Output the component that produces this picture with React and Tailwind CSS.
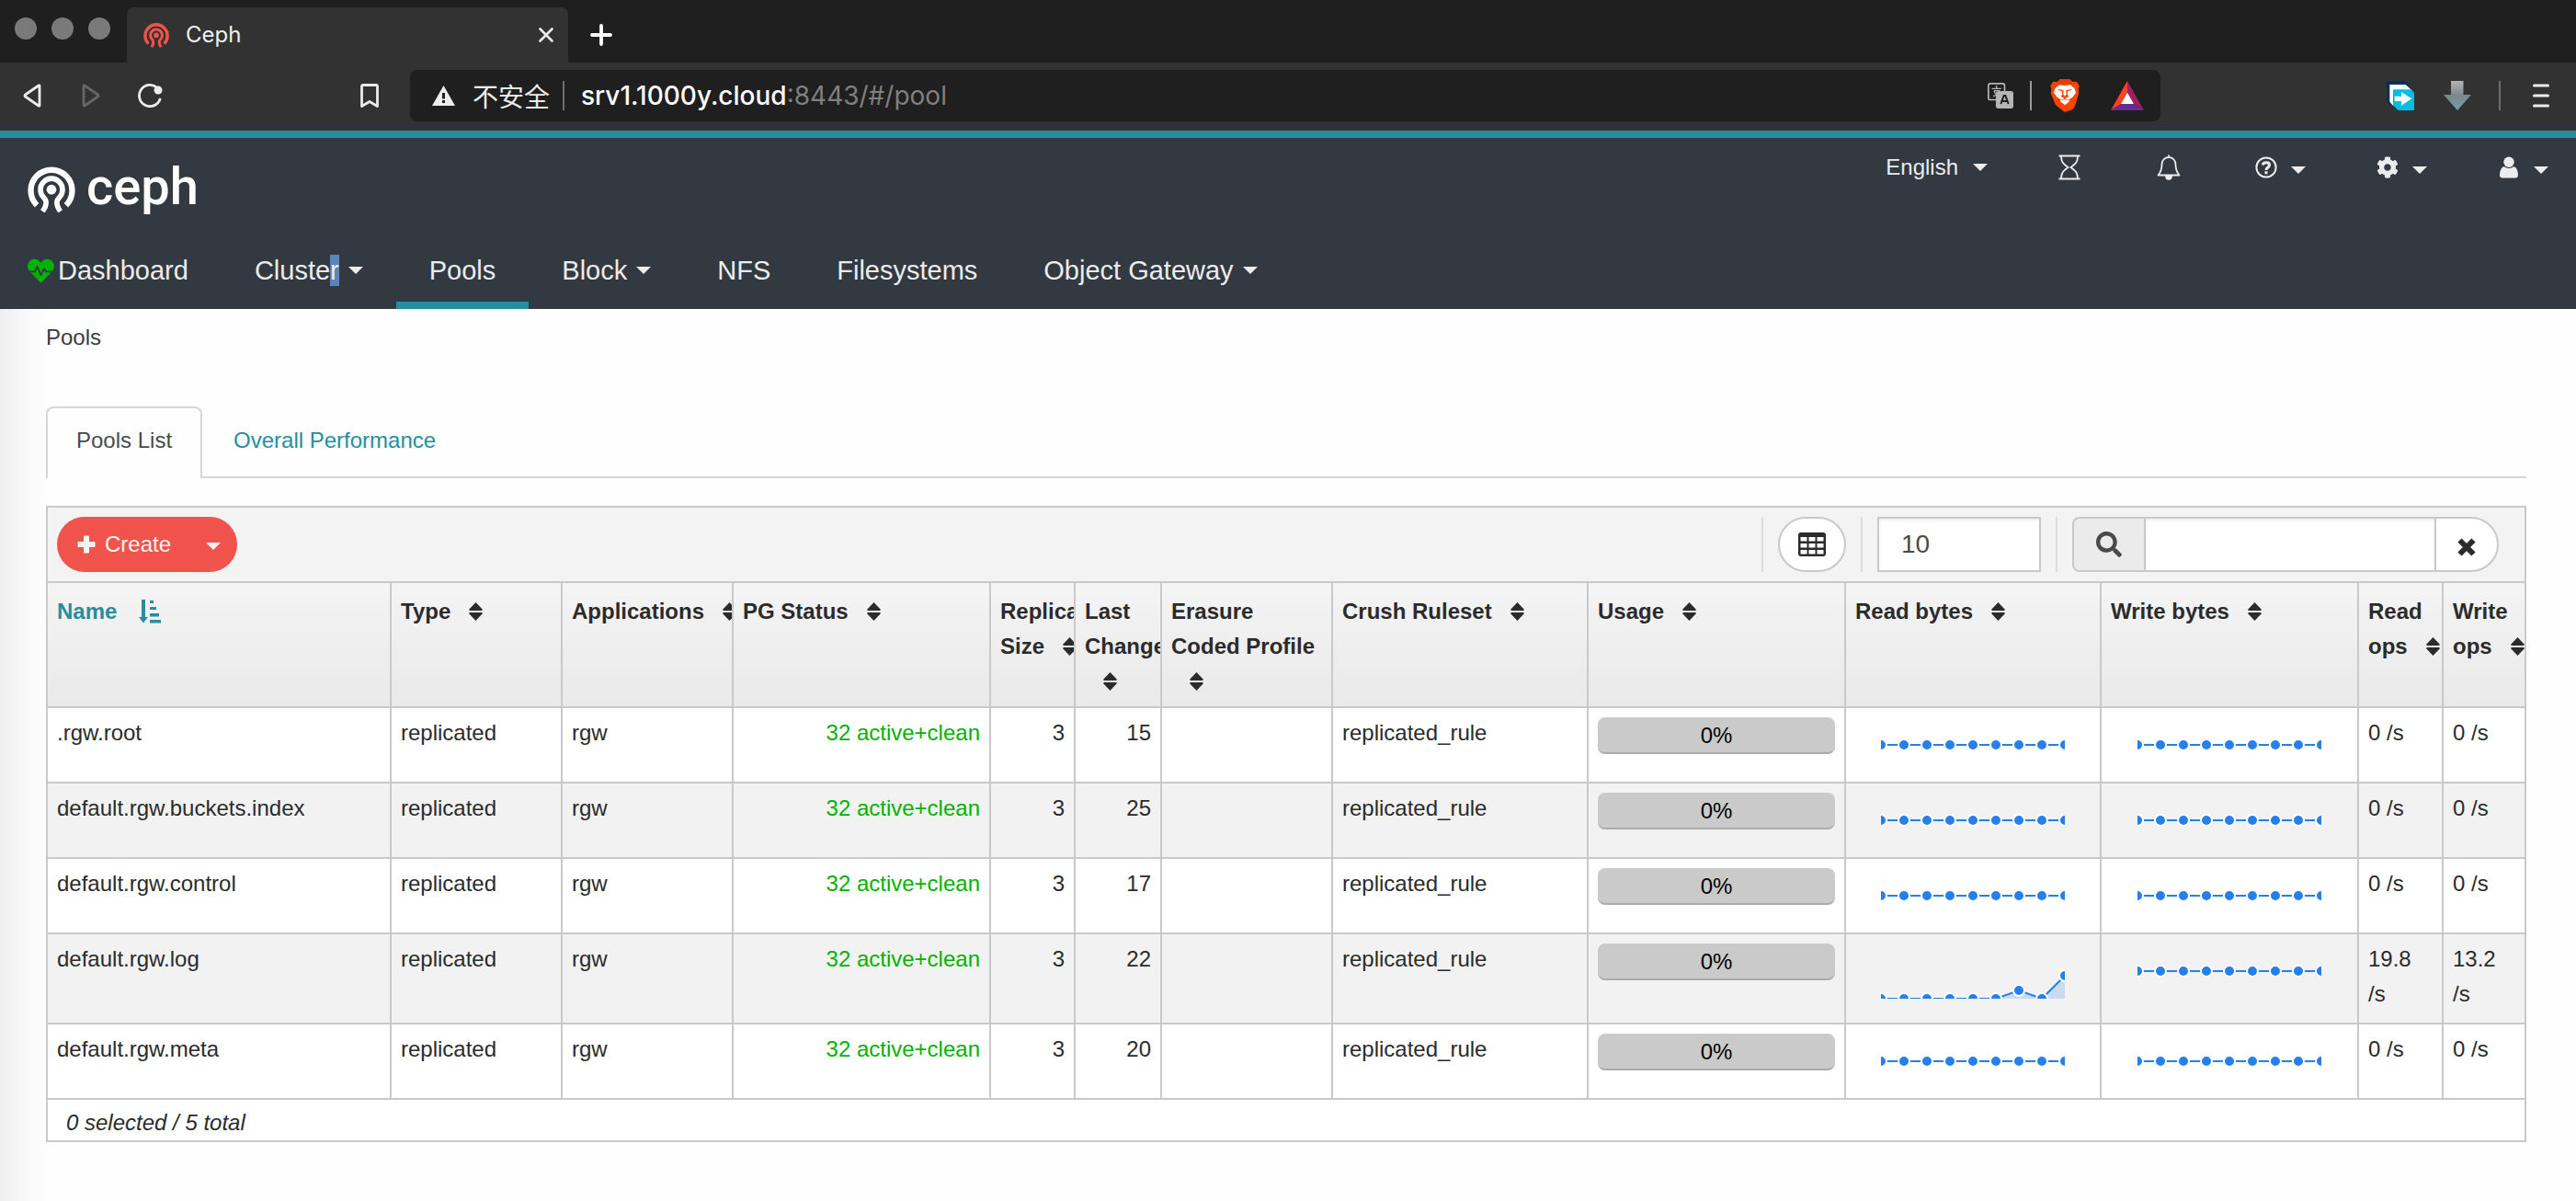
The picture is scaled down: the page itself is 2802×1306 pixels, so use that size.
import React from "react";
import { FaHeartbeat, FaSearch, FaCog } from "react-icons/fa";

function CephMark({ className }) {
  return (
    <svg viewBox="89 539 156 152" className={className} fill="none" stroke="currentColor" aria-hidden="true">
      <path strokeWidth="19" d="M119.3 668 A67.5 67.5 0 1 1 214.7 668" />
      <path
        strokeWidth="17"
        d="M138 688 Q151 670 149 656 Q148 649 141.5 642.5 A36 36 0 1 1 192.5 642.5 Q186 649 185 656 Q183 670 196 688"
      />
      <circle cx="167" cy="617" r="16" fill="currentColor" stroke="none" />
    </svg>
  );
}

function Caret() {
  return (
    <svg viewBox="0 0 16 8" className="h-2 w-4 shrink-0" fill="currentColor" aria-hidden="true">
      <path d="M0 0h16L8 8z" />
    </svg>
  );
}

function SortIcon() {
  return (
    <svg viewBox="0 0 15 20" className="ml-5 inline-block h-5 w-[15px] align-[-2px]" fill="currentColor" aria-label="Sort">
      <path d="M7.5 0 14.6 7.6Q15 9 14 9H1Q0 9 .4 7.6z" />
      <path d="M7.5 20 14.6 12.4Q15 11 14 11H1Q0 11 .4 12.4z" />
    </svg>
  );
}

function SortedIcon() {
  return (
    <svg viewBox="0 0 24 26" className="ml-6 inline-block h-[26px] w-6 align-[-5px]" fill="currentColor" aria-label="Sorted ascending">
      <path d="M3 0h4v19h3l-5 6.500-5-6.500h3z" />
      <path d="M12 1h4v3h-4zM12 8h7v3h-7zM12 15h10v3.500H12zM12 22h12v3.500H12z" />
    </svg>
  );
}

/* ---------- Browser window ---------- */

function BrowserTabs() {
  return (
    <div className="flex h-[68px] items-end bg-[#1f1f1f]">
      <div className="flex gap-4 self-start pt-[19px] pl-4">
        <span className="size-6 rounded-full bg-[#7a7a7a]" />
        <span className="size-6 rounded-full bg-[#7a7a7a]" />
        <span className="size-6 rounded-full bg-[#7a7a7a]" />
      </div>
      <div className="ml-[18px] flex h-[60px] w-[480px] items-center rounded-t-lg bg-[#323232] pr-4 pl-[18px]">
        <CephMark className="size-7 text-[#ef534c]" />
        <span className="ml-[18px] flex-1 text-2xl text-[#f0f0f0]">Ceph</span>
        <button aria-label="Close tab" className="text-[#ededed]">
          <svg viewBox="0 0 16 16" className="size-4" fill="none" stroke="currentColor" strokeWidth="2.600" strokeLinecap="round">
            <path d="M1.500 1.500l13 13M14.500 1.500l-13 13" />
          </svg>
        </button>
      </div>
      <button aria-label="New tab" className="mb-[18px] ml-6 text-white">
        <svg viewBox="0 0 24 24" className="size-6" fill="none" stroke="currentColor" strokeWidth="3.800" strokeLinecap="round">
          <path d="M12 2v20M2 12h20" />
        </svg>
      </button>
    </div>
  );
}

function BraveIcon() {
  return (
    <svg viewBox="0 0 96 108" className="h-9 w-8">
      <path fill="#ff4500" d="M33 0h30l10 9 13-1 9 13-3 13 2 12-14 44q-3 7-9 10L48 108 25 90q-6-4-9-10L2 46l2-12-3-13L10 8l13 1z" />
      <path fill="#e03c00" d="M33 0h30l10 9-4 8H27l-4-8z" />
      <path fill="#fff" d="M30 19l18 3 18-3 14 12 4 14-11 14-12 8 2 6-15 12-15-12 2-6-12-8-11-14 4-14z" />
      <path fill="#ff4500" d="M24 32l20 4-1 14 5 3 5-3-1-14 20-4-5 5-9 2-2 10 5 8-13 7-13-7 5-8-2-10-9-2z" />
      <path fill="#fff" d="M45 33h6l-1 22h-4z" />
      <path fill="#ff4500" d="M33 70l15-7 15 7-15-3z" />
    </svg>
  );
}

function TranslateIcon() {
  return (
    <svg viewBox="0 0 84 84" className="size-7">
      <rect x="2.500" y="2.500" width="53" height="53" rx="7" fill="#1f1f1f" stroke="#b5b5b5" strokeWidth="5" />
      <path d="M29 9v9M14 19h30M20 26h18q-2 14-20 18M21 27q6 14 19 17" stroke="#b5b5b5" strokeWidth="4" fill="none" />
      <rect x="27" y="27" width="57" height="57" rx="8" fill="#b5b5b5" />
      <path d="M43 69l10-27h5l10 27M47 60h17" stroke="#1f1f1f" strokeWidth="6" fill="none" />
    </svg>
  );
}

function AddressBar() {
  return (
    <div className="flex h-[74px] items-start bg-[#323232] pt-2 text-[#ececec]">
      <div className="flex h-14 items-center">
        <button aria-label="Back" className="ml-[25px]">
          <svg viewBox="0 0 20 26" className="h-[26px] w-5" fill="none" stroke="currentColor" strokeWidth="2.800" strokeLinejoin="round">
            <path d="M18 2.500v21q0 1-1 .5L2.500 14q-1-1 0-2L17 2q1-.5 1 .5z" />
          </svg>
        </button>
        <button aria-label="Forward" className="ml-11 text-[#666]">
          <svg viewBox="0 0 20 26" className="h-[26px] w-5" fill="none" stroke="currentColor" strokeWidth="2.800" strokeLinejoin="round">
            <path d="M2 2.500v21q0 1 1 .5L17.500 14q1-1 0-2L3 2q-1-.5-1 .5z" />
          </svg>
        </button>
        <button aria-label="Reload" className="ml-10">
          <svg viewBox="0 0 28 26" className="h-[26px] w-7" fill="none" stroke="currentColor" strokeWidth="2.800" strokeLinecap="round">
            <path d="M22 4.500A11.600 11.600 0 1 0 25 17" />
            <circle cx="23" cy="7" r="4.500" fill="currentColor" stroke="none" />
          </svg>
        </button>
        <button aria-label="Bookmark" className="ml-[215px]">
          <svg viewBox="0 0 20 26" className="h-[26px] w-5" fill="none" stroke="currentColor" strokeWidth="2.800" strokeLinejoin="round">
            <path d="M1.500 3q0-1.500 1.500-1.500h14q1.500 0 1.500 1.500v21.500L10 19.500l-8.500 5z" />
          </svg>
        </button>
      </div>
      <div className="ml-[34px] flex h-14 flex-1 items-center rounded-lg bg-[#1f1f1f] pr-[18px] pl-6">
        <svg viewBox="0 0 25 22" className="h-[22px] w-[25px]">
          <path fill="#ececec" d="M12.500 0 25 22H0z" />
          <path stroke="#1f1f1f" strokeWidth="3" d="M12.500 8v6.500M12.500 16v3" />
        </svg>
        <span className="ml-[19px] font-['Noto_Sans_CJK_SC',sans-serif] text-[28px] leading-8">不安全</span>
        <span className="ml-3.5 h-8 w-0.5 bg-[#6e6e6e]" />
        <span className="ml-[18px] flex-1 text-[28px] leading-8 text-[#808080]">
          <span className="font-medium text-white">srv1.1000y.cloud</span>:8443/#/pool
        </span>
        <button aria-label="Translate"><TranslateIcon /></button>
        <span className="mr-5 ml-[18px] h-8 w-0.5 bg-[#9a9a9a]" />
        <button aria-label="Brave Shields"><BraveIcon /></button>
        <button aria-label="Brave Rewards" className="ml-[34px]">
          <svg viewBox="0 0 108 96" className="h-8 w-9">
            <path fill="#ff4124" d="M54 0v40L33 75 0 96z" />
            <path fill="#9e1f63" d="M54 0l54 96-33-21-21-35z" />
            <path fill="#662d91" d="M0 96l33-21h42l33 21z" />
            <path fill="#fff" d="M54 38l21 37H33z" />
          </svg>
        </button>
      </div>
      <div className="ml-[246px] flex h-14 items-center pr-[29px]">
        <button aria-label="Extension">
          <svg viewBox="0 0 90 96" className="h-8 w-[30px]">
            <path fill="#06305c" d="M0 0h60l18 14H14v70L2 68z" />
            <path fill="#fff" d="M10 12h52l22 20H22v50L10 68z" />
            <path fill="#00bfe2" d="M22 28h58l10 10v58H38L22 80z" />
            <path fill="#fff" d="M26 50h22V36l34 22-34 22V66H26z" />
          </svg>
        </button>
        <button aria-label="Downloads" className="ml-8">
          <svg viewBox="0 0 30 32" className="h-8 w-[30px]">
            <defs>
              <linearGradient id="dl" x1="0" y1="0" x2="0" y2="1">
                <stop offset="0" stopColor="#b4b4b6" />
                <stop offset=".5" stopColor="#7d868b" />
                <stop offset="1" stopColor="#6fa3aa" />
              </linearGradient>
            </defs>
            <path fill="url(#dl)" d="M8 0h13.500v15H30L15 32 0 15h8z" />
          </svg>
        </button>
        <span className="ml-[30px] h-8 w-0.5 bg-[#6e6e6e]" />
        <button aria-label="Menu" className="ml-[35px]">
          <svg viewBox="0 0 18 26" className="h-[26px] w-[18px]" stroke="currentColor" strokeWidth="3" strokeLinecap="round">
            <path d="M1.500 2h15M1.500 13h15M1.500 24h15" />
          </svg>
        </button>
      </div>
    </div>
  );
}

/* ---------- Dashboard header ---------- */

function HeaderTools() {
  return (
    <div className="flex h-[38px] items-center gap-[72px] text-[#ececec]">
      <button className="flex items-center gap-4 text-2xl leading-[38px]">
        English
        <Caret />
      </button>
      <div className="flex items-center gap-[74px]">
        <button aria-label="Tasks" className="flex w-[34px] justify-center">
          <svg viewBox="0 0 24 28" className="h-7 w-6" fill="none" stroke="currentColor" strokeWidth="1.800">
            <path strokeWidth="2.200" d="M.5 1.500h23M.5 26.500h23" />
            <path d="M3 2c0 6 2 8 7.500 12C5 18 3 20 3 26M21 2c0 6-2 8-7.500 12C19 18 21 20 21 26" />
          </svg>
        </button>
        <button aria-label="Notifications" className="flex w-[34px] justify-center">
          <svg viewBox="0 0 26 28" className="h-7 w-[26px]" fill="none" stroke="currentColor" strokeWidth="1.800" strokeLinejoin="round">
            <path d="M13 3c-5 0-7.500 4-7.500 8 0 6-1.500 8.500-4 11.500h23c-2.500-3-4-5.500-4-11.500 0-4-2.500-8-7.500-8zM13 .5V3" />
            <path fill="currentColor" d="M10 23.500c0 4.500 6 4.500 6 0z" />
          </svg>
        </button>
        <button aria-label="Help" className="flex items-center gap-3">
          <span className="flex w-[30px] justify-center">
            <svg viewBox="0 0 24 24" className="size-6" fill="none" stroke="currentColor">
              <circle cx="12" cy="12" r="10.600" strokeWidth="2" />
              <path strokeWidth="3" d="M8 9.300C9.500 6 15.500 6 15.500 9.500c0 2.700-3.500 2.300-3.500 5.500M12 16.300v3" />
            </svg>
          </span>
          <span className="pt-1.5"><Caret /></span>
        </button>
        <button aria-label="Settings" className="flex items-center gap-3">
          <span className="flex w-[30px] justify-center"><FaCog className="size-6" /></span>
          <span className="pt-1.5"><Caret /></span>
        </button>
        <button aria-label="User" className="flex items-center gap-3">
          <span className="flex w-[30px] justify-center">
            <svg viewBox="0 0 20 24" className="h-6 w-5" fill="currentColor">
              <circle cx="10" cy="6.200" r="5.700" />
              <path d="M4.500 11q5.500 4 11 0Q20 13 20 20.500q0 3-3 3H3q-3 0-3-3Q0 13 4.500 11z" />
            </svg>
          </span>
          <span className="pt-1.5"><Caret /></span>
        </button>
      </div>
    </div>
  );
}

const navItems = [
  { label: "Pools", active: true },
  { label: "Block", menu: true },
  { label: "NFS" },
  { label: "Filesystems" },
  { label: "Object Gateway", menu: true },
];

function Header() {
  const item = "flex items-center gap-2.5 border-b-8 px-9 pb-3";
  return (
    <header className="border-t-8 border-[#268e9f] bg-[#323941] text-[#ececec]">
      <div className="flex h-[122px] items-start justify-between pr-[30px] pl-[30px]">
        <a href="#/dashboard" className="flex items-start gap-3 pt-[30px] text-white">
          <CephMark className="h-[51px] w-[52px]" />
          <span className="font-[Roboto,sans-serif] text-[56px] leading-[46px] font-medium">ceph</span>
        </a>
        <div className="pt-[13px]"><HeaderTools /></div>
      </div>
      <nav className="flex text-[29px] leading-[44px]">
        <a href="#/dashboard" className="flex items-center gap-1 border-b-8 border-transparent pr-9 pb-3 pl-[30px]">
          <FaHeartbeat className="size-[29px] text-[#00b300]" />
          Dashboard
        </a>
        <a href="#/cluster" className={item + " border-transparent"}>
          <span>Cluste<span className="bg-[#5b84b8] py-px">r</span></span>
          <Caret />
        </a>
        {navItems.map((n) => (
          <a key={n.label} href="#/pool" className={item + (n.active ? " border-[#268e9f]" : " border-transparent")}>
            {n.label}
            {n.menu && <Caret />}
          </a>
        ))}
      </nav>
    </header>
  );
}

/* ---------- Pools table ---------- */

const columns = [
  { lines: ["Name"], width: "w-[374px]", sorted: true },
  { lines: ["Type"], width: "w-[186px]" },
  { lines: ["Applications"], width: "w-[186px]" },
  { lines: ["PG Status"], width: "w-[280px]" },
  { lines: ["Replica", "Size"], width: "w-[92px]" },
  { lines: ["Last", "Change", ""], width: "w-[94px]" },
  { lines: ["Erasure", "Coded Profile", ""], width: "w-[186px]" },
  { lines: ["Crush Ruleset"], width: "w-[278px]" },
  { lines: ["Usage"], width: "w-[280px]" },
  { lines: ["Read bytes"], width: "w-[278px]" },
  { lines: ["Write bytes"], width: "w-[280px]" },
  { lines: ["Read", "ops"], width: "w-[92px]" },
  { lines: ["Write", "ops"], width: "w-[88px]" },
];

const flat = [30, 30, 30, 30, 30, 30, 30, 30, 30];
const rising = [60, 60, 60, 60, 60, 60, 51, 60, 35];

const rows = [
  { name: ".rgw.root", change: 15, read: flat, write: flat, readOps: "0 /s", writeOps: "0 /s" },
  { name: "default.rgw.buckets.index", change: 25, read: flat, write: flat, readOps: "0 /s", writeOps: "0 /s" },
  { name: "default.rgw.control", change: 17, read: flat, write: flat, readOps: "0 /s", writeOps: "0 /s" },
  { name: "default.rgw.log", change: 22, read: rising, write: flat, readOps: "19.8 /s", writeOps: "13.2 /s" },
  { name: "default.rgw.meta", change: 20, read: flat, write: flat, readOps: "0 /s", writeOps: "0 /s" },
];

function Sparkline({ points }) {
  const line = points.map((y, i) => `${i * 25},${y}`).join(" ");
  return (
    <svg viewBox="0 0 200 60" className="mx-auto mt-0.5 h-[60px] w-[200px]" role="img" aria-label="Trend">
      {points !== flat && <polygon points={`0,60 ${line} 200,60`} fill="#2680eb" fillOpacity=".2" />}
      <polyline points={line} fill="none" stroke="#2680eb" strokeWidth="2" />
      {points.map((y, i) => (
        <circle key={i} cx={i * 25} cy={y} r="6" fill="#2680eb" stroke="#fff" strokeWidth="2" />
      ))}
    </svg>
  );
}

function Toolbar() {
  return (
    <div className="flex h-20 items-center justify-between bg-[#f3f3f3] pr-7 pl-2.5">
      <div className="flex h-[60px] overflow-hidden rounded-full bg-[#ef534c] text-[#f3f3f3]">
        <button className="flex items-center gap-2.5 pr-4 pl-[22px] text-2xl">
          <svg viewBox="0 0 20 20" className="size-5" fill="currentColor" aria-hidden="true">
            <path d="M7 1.500Q7 .5 8 .5h4q1 0 1 1V7h5.500q1 0 1 1v4q0 1-1 1H13v5.500q0 1-1 1H8q-1 0-1-1V13H1.500q-1 0-1-1V8q0-1 1-1H7z" />
          </svg>
          Create
        </button>
        <button aria-label="More actions" className="flex items-center pt-1 pr-[18px] pl-[22px]"><Caret /></button>
      </div>
      <div className="flex h-[60px]">
        <div className="border-l-2 border-[#dcdcdc] px-4">
          <button aria-label="Columns" className="flex h-[60px] w-[74px] items-center justify-center rounded-full border-2 border-[#c9c9c9] bg-white text-[#2b2b2b]">
            <svg viewBox="0 0 30 26" className="h-[26px] w-[30px]">
              <rect width="30" height="26" rx="3" fill="currentColor" />
              <path fill="#fff" d="M2.500 5h7v4.500h-7zM11.500 5h7v4.500h-7zM20.500 5h7v4.500h-7zM2.500 12h7v4.500h-7zM11.500 12h7v4.500h-7zM20.500 12h7v4.500h-7zM2.500 19h7v4.500h-7zM11.500 19h7v4.500h-7zM20.500 19h7v4.500h-7z" />
            </svg>
          </button>
        </div>
        <div className="border-l-2 border-[#dcdcdc] px-4">
          <input
            aria-label="Rows per page"
            defaultValue="10"
            className="h-[60px] w-[178px] border-2 border-[#c9c9c9] bg-white pl-6 text-[28px] text-[#4a4a4a] shadow-[inset_0_2px_3px_rgba(0,0,0,0.07)]"
          />
        </div>
        <div className="flex border-l-2 border-[#dcdcdc] pl-4">
          <span className="flex w-20 items-center justify-center rounded-l-lg border-2 border-[#c9c9c9] bg-[#ebebeb] text-[#4a4a4a]">
            <FaSearch className="size-7" />
          </span>
          <input aria-label="Search" className="w-[314px] border-y-2 border-[#c9c9c9] bg-white px-6 text-[28px] shadow-[inset_0_2px_3px_rgba(0,0,0,0.07)]" />
          <button aria-label="Clear search" className="flex w-[70px] items-center justify-center rounded-r-[30px] border-2 border-[#c9c9c9] bg-white pt-1.5 text-[#2b2b2b]">
            <svg viewBox="0 0 20 20" className="size-5" fill="none" stroke="currentColor" strokeWidth="6">
              <path d="M2.500 2.500l15 15M17.500 2.500l-15 15" />
            </svg>
          </button>
        </div>
      </div>
    </div>
  );
}

function PoolsTable() {
  const base = "border-r-2 border-b-2 border-[#c9c9c9] px-2.5 pt-2 align-top last:border-r-0";
  const cell = base + " pb-2.5";
  return (
    <table className="w-full table-fixed border-separate border-spacing-0 border-t-2 border-[#c9c9c9] text-left text-2xl leading-[38px]">
      <thead>
        <tr className="bg-linear-to-b from-[#f4f4f4] to-[#e9e9e9]">
          {columns.map((c) => (
            <th
              key={c.lines.join(" ")}
              scope="col"
              className={
                "overflow-hidden border-r-2 border-b-2 border-[#c9c9c9] pt-3 pb-2 pl-2.5 align-top font-bold whitespace-nowrap last:border-r-0 " +
                c.width + (c.sorted ? " text-[#268e9f]" : "")
              }
            >
              {c.lines.map((l, i) => (
                <div key={i}>
                  {l}
                  {i === c.lines.length - 1 && (c.sorted ? <SortedIcon /> : <SortIcon />)}
                </div>
              ))}
            </th>
          ))}
        </tr>
      </thead>
      <tbody>
        {rows.map((r) => (
          <tr key={r.name} className="bg-white even:bg-[#f2f2f2]">
            <td className={cell}>{r.name}</td>
            <td className={cell}>replicated</td>
            <td className={cell}>rgw</td>
            <td className={cell + " text-right text-[#00b300]"}>32 active+clean</td>
            <td className={cell + " text-right"}>3</td>
            <td className={cell + " text-right"}>{r.change}</td>
            <td className={cell}></td>
            <td className={cell}>replicated_rule</td>
            <td className={cell}>
              <div className="mt-0.5 h-10 rounded-lg border-b-2 border-[#ababab] bg-[#cacaca] text-center leading-10 text-black">0%</div>
            </td>
            <td className={cell}><Sparkline points={r.read} /></td>
            <td className={cell}><Sparkline points={r.write} /></td>
            <td className={base + " pb-3"}>{r.readOps}</td>
            <td className={base + " pb-3"}>{r.writeOps}</td>
          </tr>
        ))}
      </tbody>
    </table>
  );
}

export default function App() {
  return (
    <div className="min-h-screen bg-[#fefefe] font-[Inter,sans-serif]">
      <BrowserTabs />
      <AddressBar />
      <div className="font-['Liberation_Sans',Arial,sans-serif] text-[#2b2b2b]">
        <Header />
        <main className="min-h-[970px] bg-[linear-gradient(to_right,#eeeeee,#f8f8f8_24px,#fefefe_56px)] pt-3 pr-[54px] pl-[50px] text-2xl leading-[38px]">
          <div className="text-[#3c3c3c]">Pools</div>
          <div className="mt-14 flex border-b-2 border-[#d6d6d6]" role="tablist">
            <button role="tab" aria-selected="true" className="-mb-0.5 rounded-t-lg border-2 border-b-0 border-[#d6d6d6] bg-[#fefefe] px-[31px] pt-4 pb-[22px] text-[#4a4a4a]">
              Pools List
            </button>
            <button role="tab" aria-selected="false" className="px-[34px] pt-[18px] pb-5 text-[#268e9f]">
              Overall Performance
            </button>
          </div>
          <section className="mt-[30px] border-2 border-[#c9c9c9] bg-white">
            <Toolbar />
            <PoolsTable />
            <div className="px-5 pt-1.5 italic">0 selected / 5 total</div>
          </section>
        </main>
      </div>
    </div>
  );
}
